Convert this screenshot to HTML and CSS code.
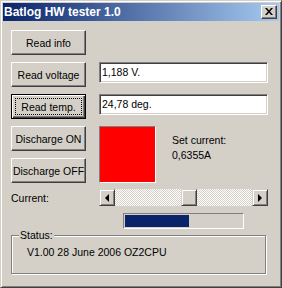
FILE: index.html
```html
<!DOCTYPE html>
<html lang="en">
<head>
    <meta charset="UTF-8">
    <title>Batlog HW tester 1.0</title>
    <link rel="stylesheet" href="styles.css">
</head>
<body>
    <div class="window">
        <div class="titlebar">
            <span class="title">Batlog HW tester 1.0</span>
            <div class="close">
                <svg width="8" height="7" viewBox="0 0 8 7">
                    <path d="M0 0h2l2 2.5L6 0h2L5 3.5 8 7H6L4 4.5 2 7H0l3-3.5z" fill="#000"/>
                </svg>
            </div>
        </div>

        <div class="client">
            <div class="row">
                <div class="btn">Read info</div>
            </div>

            <div class="row">
                <div class="btn">Read voltage</div>
                <div class="edit">1,188 V.</div>
            </div>

            <div class="row">
                <div class="btn default"><span class="focus">Read temp.</span></div>
                <div class="edit">24,78 deg.</div>
            </div>

            <div class="discharge">
                <div class="btn">Discharge ON</div>
                <div class="led"></div>
                <div class="set-current">
                    <div>Set current:</div>
                    <div>0,6355A</div>
                </div>
                <div class="btn">Discharge OFF</div>
            </div>

            <div class="row current-row">
                <span>Current:</span>
                <div class="scrollbar">
                    <div class="sb-btn"><span class="arrow-left"></span></div>
                    <div class="sb-track">
                        <div class="sb-thumb" style="margin-left: 66px"></div>
                    </div>
                    <div class="sb-btn"><span class="arrow-right"></span></div>
                </div>
            </div>

            <div class="progress">
                <div class="progress-fill" style="width: 64px"></div>
            </div>

            <div class="status">
                <span class="status-label">Status:</span>
                <div class="status-text">V1.00 28 June 2006 OZ2CPU</div>
            </div>
        </div>
    </div>
</body>
</html>
```

FILE: styles.css
```css
* {
    margin: 0;
    padding: 0;
    box-sizing: border-box;
    font-family: "Liberation Sans", Arial, sans-serif;
    font-size: 10.5px;
}

body {
    background: #d4d0c8;
    width: 282px;
    height: 288px;
}

.window {
    width: 282px;
    height: 288px;
    background: #d4d0c8;
    border: 1px solid;
    border-color: #d4d0c8 #404040 #404040 #d4d0c8;
    box-shadow: inset 1px 1px #fff, inset -1px -1px #808080;
    padding: 2px;
    color: #000;
}

.titlebar {
    height: 18px;
    background: linear-gradient(to right, #0a246a, #a6caf0);
    display: flex;
    align-items: center;
    justify-content: space-between;
    padding: 0 2px 0 1px;
}

.title {
    color: #fff;
    font-weight: bold;
    font-size: 12px;
}

.close {
    width: 16px;
    height: 14px;
    background: #d4d0c8;
    border: 1px solid;
    border-color: #fff #404040 #404040 #fff;
    box-shadow: inset -1px -1px #808080;
    display: flex;
    align-items: center;
    justify-content: center;
    padding-bottom: 1px;
}

.client {
    padding: 9px 0 0 8px;
}

.row {
    display: grid;
    grid-template-columns: 75px 169px;
    column-gap: 13px;
    align-items: start;
    margin-bottom: 7px;
}

.btn {
    height: 25px;
    background: #d4d0c8;
    border: 1px solid;
    border-color: #fff #404040 #404040 #fff;
    box-shadow: inset -1px -1px #808080;
    display: flex;
    align-items: center;
    justify-content: center;
    white-space: nowrap;
}

.btn.default {
    border: 1px solid #000;
    box-shadow: inset 1px 1px #fff, inset -1px -1px #404040, inset -2px -2px #808080;
    padding: 3px;
}

.focus {
    flex: 1;
    align-self: stretch;
    display: flex;
    align-items: center;
    justify-content: center;
    border: 1px dotted #000;
}

.edit {
    height: 21px;
    background: #fff;
    border: 1px solid;
    border-color: #808080 #fff #fff #808080;
    box-shadow: inset 1px 1px #404040, inset -1px -1px #d4d0c8;
    padding: 0 2px;
    line-height: 19px;
}

.discharge {
    display: grid;
    grid-template-columns: 75px 57px 1fr;
    grid-template-rows: 25px 25px;
    column-gap: 13px;
    row-gap: 7px;
    margin-bottom: 6px;
}

.led {
    grid-row: 1 / 3;
    grid-column: 2;
    background: #ff0000;
    border: 1px solid;
    border-color: #808080 #fff #fff #808080;
}

.set-current {
    grid-row: 1 / 3;
    grid-column: 3;
    padding: 7px 0 0 3px;
    line-height: 15px;
}

.discharge .btn:last-child {
    grid-column: 1;
    grid-row: 2;
}

.current-row {
    align-items: center;
}

.scrollbar {
    height: 17px;
    display: flex;
}

.sb-btn {
    width: 16px;
    height: 17px;
    background: #d4d0c8;
    border: 1px solid;
    border-color: #d4d0c8 #404040 #404040 #d4d0c8;
    box-shadow: inset 1px 1px #fff, inset -1px -1px #808080;
    display: flex;
    align-items: center;
    justify-content: center;
}

.arrow-left {
    border-style: solid;
    border-width: 4px 4px 4px 0;
    border-color: transparent #000 transparent transparent;
}

.arrow-right {
    border-style: solid;
    border-width: 4px 0 4px 4px;
    border-color: transparent transparent transparent #000;
}

.sb-track {
    flex: 1;
    background: repeating-conic-gradient(#fff 0 25%, #d4d0c8 0 50%) 0 0 / 2px 2px;
}

.sb-thumb {
    width: 16px;
    height: 17px;
    background: #d4d0c8;
    border: 1px solid;
    border-color: #d4d0c8 #404040 #404040 #d4d0c8;
    box-shadow: inset 1px 1px #fff, inset -1px -1px #808080;
}

.progress {
    width: 121px;
    height: 16px;
    margin: 0 0 6px 112px;
    border: 1px solid;
    border-color: #808080 #fff #fff #808080;
    padding: 1px;
}

.progress-fill {
    height: 100%;
    background: #0a246a;
}

.status {
    position: relative;
    width: 255px;
    height: 39px;
    border: 1px solid #808080;
    box-shadow: 1px 1px #fff, inset 1px 1px #fff;
    padding: 10px 0 0 15px;
}

.status-label {
    position: absolute;
    top: -7px;
    left: 7px;
    background: #d4d0c8;
    padding: 0 1px;
}
```
